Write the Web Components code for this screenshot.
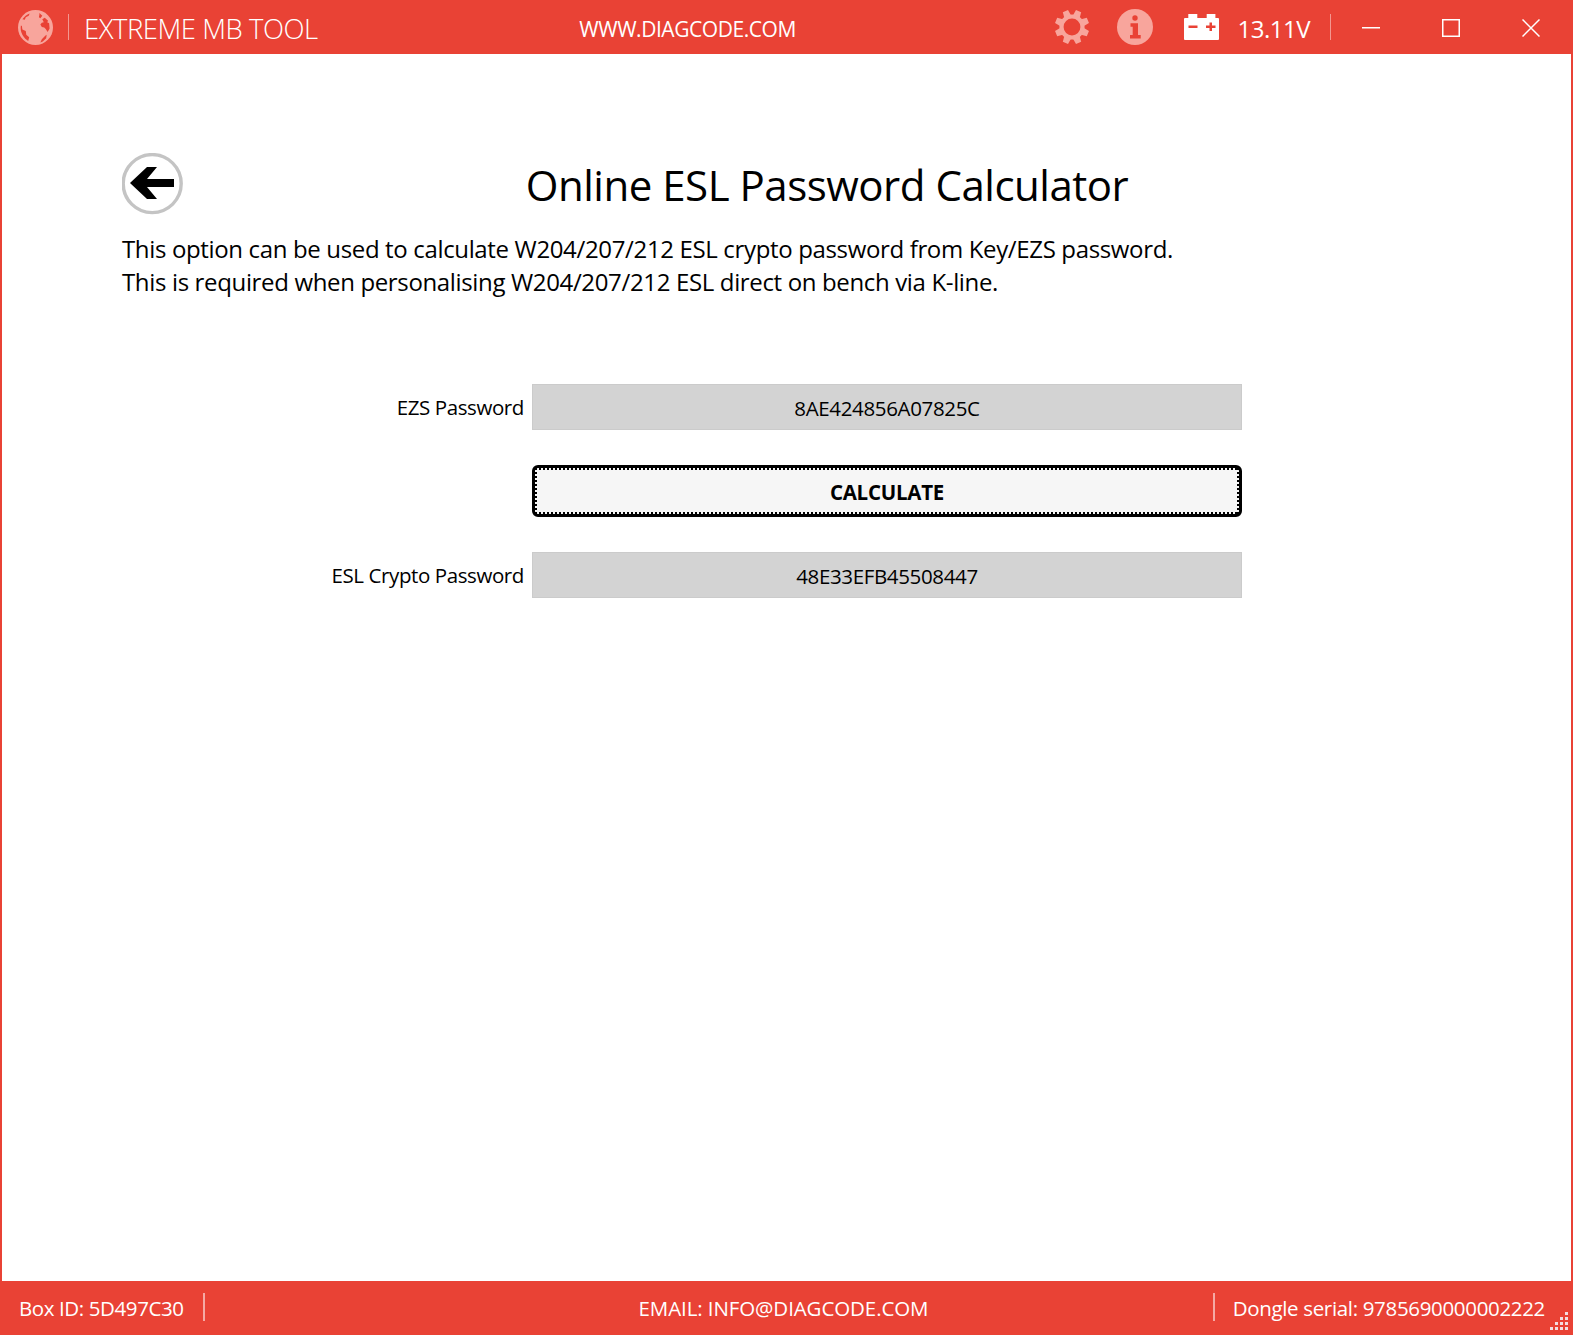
<!DOCTYPE html>
<html>
<head>
<meta charset="utf-8">
<title>Extreme MB Tool</title>
<style>
  html, body { margin: 0; padding: 0; height: 100%; }
  body { font-family: "Open Sans", "Noto Sans", sans-serif; color: #000; background: #fff; }
</style>
</head>
<body>
<mb-window>
  <mb-titlebar slot="top" voltage="13.11V"></mb-titlebar>
  <esl-page>
    <mb-field label="EZS Password" value="8AE424856A07825C"></mb-field>
    <mb-action-button>CALCULATE</mb-action-button>
    <mb-field label="ESL Crypto Password" value="48E33EFB45508447"></mb-field>
  </esl-page>
  <mb-statusbar slot="bottom" box="5D497C30" email="INFO@DIAGCODE.COM" dongle="9785690000002222"></mb-statusbar>
</mb-window>

<script>
//main window frame, red border with top and bottom bars
class mbWindow extends HTMLElement {
    connectedCallback() {
        const shadow = this.attachShadow({mode: "open"});
        shadow.innerHTML = `
        <style>
            :host {
                display: flex;
                flex-direction: column;
                width: 1573px;
                height: 1335px;
                box-sizing: border-box;
            }
            .middle {
                flex: 1;
                min-height: 0;
                border-left: 2px solid #e94235;
                border-right: 2px solid #e94235;
            }
        </style>
        <slot name="top"></slot>
        <div class="middle"><slot></slot></div>
        <slot name="bottom"></slot>`;
    }
}

//title bar with globe, app name, site and status icons
class mbTitlebar extends HTMLElement {
    connectedCallback() {
        const shadow = this.attachShadow({mode: "open"});
        const teeth = [0, 45, 90, 135, 180, 225, 270, 315].map(a =>
            `<path d="M15.200 .8h5.600l.9 6.700h-7.400z" transform="rotate(${a + 22.5} 18 18)"/>`).join("");
        shadow.innerHTML = `
        <style>
            :host {
                display: flex;
                align-items: center;
                height: 54px;
                background: #e94235;
                color: #fff;
            }
            svg { display: block; flex: none; }
            .left { display: flex; align-items: center; padding-left: 18px; padding-right: 3px; }
            .sep { width: 1px; height: 26px; background: rgba(255,255,255,.45); flex: none; }
            .name { font-size: 27.500px; font-weight: 300; margin-left: 15px; letter-spacing: -.47px; white-space: nowrap; padding-top: 2px; }
            .site { flex: 1; text-align: center; font-size: 21px; letter-spacing: -.45px; white-space: nowrap; padding-top: 4px; }
            .right { display: flex; align-items: center; padding-right: 2px; }
            .volt { font-size: 24px; margin-left: 18px; margin-right: 20px; letter-spacing: -.5px; padding-top: 2px; }
            .btn { width: 80px; display: flex; justify-content: center; padding-top: 2px; }
        </style>
        <div class="left">
            <svg width="35" height="35" viewBox="0 0 36 36">
                <circle cx="18" cy="18" r="18" fill="#f8a59c"/>
                <path fill="#e94235" d="M12 3.500c-3 1.200-5.500 3.200-7.500 6l2.500.5 1-2.500 3-1.500zM22 3l3 3-2 2.500-1.500-1 .5-2.500zM25 9.500l2.500-1.500 3.500 3-1 1.500 2 1 .5 5.500-2 3.500-2-3-1.500-1.500-2.500-.5-1.500-2.500 1.500-2 2-.5zM3 16c-1 5 1 10 4.500 13.500l3 2.500 1-4-3-2.500-.5-4-3.500-1.500-.5-3.500zM28 26.500l1.500-1-.5 3.500-3.500 3.500-2.500 1 1.500-3.500z"/>
            </svg>
            <div class="sep" style="margin-left:15px"></div>
            <div class="name">EXTREME MB TOOL</div>
        </div>
        <div class="site">WWW.DIAGCODE.COM</div>
        <div class="right">
            <svg width="36" height="36" viewBox="0 0 36 36" fill="#f8a59c" style="margin-right:27px">
                ${teeth}
                <circle cx="18" cy="18" r="10.500" fill="none" stroke="#f8a59c" stroke-width="4.200"/>
            </svg>
            <svg width="36" height="36" viewBox="0 0 36 36" style="margin-right:31px">
                <circle cx="18" cy="18" r="18" fill="#f8a59c"/>
                <circle cx="18" cy="9" r="2.700" fill="#e94235"/>
                <path fill="#e94235" d="M13.500 14.300h7.500v11.700h2.700v3.500h-10.700v-3.500h2.700v-8.200h-2.200z"/>
            </svg>
            <svg width="35" height="26" viewBox="0 0 35 26">
                <path fill="#fff" d="M4.300 0h9v4h9.400v-4h8.700v4h2.600a1 1 0 0 1 1 1v20a1 1 0 0 1-1 1h-33a1 1 0 0 1-1-1v-20a1 1 0 0 1 1-1h3.300z"/>
                <path fill="#e94235" d="M4.500 11.500h9v2.500h-9zM25.500 8.500h2.500v3h3.500v2.500h-3.500v3h-2.500v-3h-3.500v-2.500h3.500z"/>
            </svg>
            <div class="volt">${this.getAttribute("voltage")}</div>
            <div class="sep"></div>
            <div class="btn">
                <svg width="18" height="18" viewBox="0 0 18 18"><rect y="8" width="18" height="1.500" fill="#fff"/></svg>
            </div>
            <div class="btn">
                <svg width="18" height="18" viewBox="0 0 18 18"><rect x=".75" y=".75" width="16.500" height="16.500" fill="none" stroke="#fff" stroke-width="1.500"/></svg>
            </div>
            <div class="btn">
                <svg width="18" height="18" viewBox="0 0 18 18"><path d="M.5.500l17 17M17.500.500l-17 17" fill="none" stroke="#fff" stroke-width="1.500"/></svg>
            </div>
        </div>`;
    }
}

//bottom status bar
class mbStatusbar extends HTMLElement {
    connectedCallback() {
        const shadow = this.attachShadow({mode: "open"});
        const dots = [[16,1],[16,6],[11,6],[16,11],[11,11],[6,11],[16,16],[11,16],[6,16],[1,16]].map(d =>
            `<rect x="${d[0]}" y="${d[1]}" width="3" height="3"/>`).join("");
        shadow.innerHTML = `
        <style>
            :host {
                display: grid;
                grid-template-columns: 1fr auto 1fr;
                align-items: center;
                position: relative;
                height: 54px;
                padding-right: 6px;
                box-sizing: border-box;
                background: #e94235;
                color: #fff;
                font-size: 20.500px;
                letter-spacing: -.4px;
                white-space: nowrap;
            }
            .side { display: flex; align-items: center; }
            .side.end { justify-content: flex-end; }
            .box { margin-left: 19px; }
            .sep { width: 2px; height: 28px; margin-bottom: 2px; background: rgba(255,255,255,.55); flex: none; }
            .mid { letter-spacing: -.1px; }
            .dongle { margin-left: 18px; margin-right: 22px; letter-spacing: -.33px; }
            svg { position: absolute; right: 4px; bottom: 4px; }
        </style>
        <div class="side">
            <div class="box">Box ID: ${this.getAttribute("box")}</div>
            <div class="sep" style="margin-left:19px"></div>
        </div>
        <div class="mid">EMAIL: ${this.getAttribute("email")}</div>
        <div class="side end">
            <div class="sep"></div>
            <div class="dongle">Dongle serial: ${this.getAttribute("dongle")}</div>
        </div>
        <svg width="20" height="20" viewBox="0 0 20 20" fill="#f3dde0">${dots}</svg>`;
    }
}

//page body: back button, heading, text and the form
class eslPage extends HTMLElement {
    connectedCallback() {
        const shadow = this.attachShadow({mode: "open"});
        shadow.innerHTML = `
        <style>
            :host {
                display: block;
                padding: 99px 101px 0 120px;
            }
            .head { display: flex; align-items: center; height: 62px; }
            .back {
                width: 62px;
                height: 62px;
                flex: none;
            }
            h1 {
                flex: 1;
                margin: 0;
                padding-top: 1px;
                text-align: center;
                font-weight: 400;
                font-size: 42px;
                letter-spacing: -.48px;
                line-height: 62px;
            }
            p {
                margin: 17px 0 0;
                font-size: 24px;
                line-height: 33px;
                letter-spacing: -.35px;
                white-space: nowrap;
            }
            .form {
                display: flex;
                flex-direction: column;
                gap: 35px;
                margin-top: 86px;
            }
        </style>
        <div class="head">
            <svg class="back" viewBox="0 0 62 62">
                <circle cx="30.200" cy="30.600" r="29" fill="#fff" stroke="#c4c4c4" stroke-width="3.400"/>
                <path d="M8 30l17-16h10l-10 12h27v8h-27l10 12h-10z"/>
            </svg>
            <h1>Online ESL Password Calculator</h1>
        </div>
        <p>This option can be used to calculate W204/207/212 ESL crypto password from Key/EZS password.<br>This is required when personalising W204/207/212 ESL direct on bench via K-line.</p>
        <div class="form"><slot></slot></div>`;
    }
}

//label plus read only grey value box
class mbField extends HTMLElement {
    connectedCallback() {
        const shadow = this.attachShadow({mode: "open"});
        shadow.innerHTML = `
        <style>
            :host { display: flex; align-items: center; }
            label {
                width: 402px;
                padding-right: 8px;
                box-sizing: content-box;
                text-align: right;
                font-size: 20.500px;
                letter-spacing: -.4px;
                white-space: nowrap;
            }
            .value {
                width: 710px;
                height: 46px;
                box-sizing: border-box;
                background: #d3d3d3;
                border: 1px solid #cbcbcb;
                display: flex;
                align-items: center;
                justify-content: center;
                font-size: 20.500px;
                letter-spacing: -.35px;
                padding-top: 2px;
            }
        </style>
        <label>${this.getAttribute("label")}</label>
        <div class="value">${this.getAttribute("value")}</div>`;
    }
}

//focused button, thick black border and dotted focus line
class mbActionButton extends HTMLElement {
    connectedCallback() {
        const shadow = this.attachShadow({mode: "open"});
        shadow.innerHTML = `
        <style>
            :host { display: block; margin-left: 410px; width: 710px; }
            .btn {
                box-sizing: border-box;
                height: 52px;
                border: 3px solid #000;
                border-radius: 6px;
                background: #f6f6f6;
                display: flex;
            }
            .focus {
                flex: 1;
                display: flex;
                align-items: center;
                justify-content: center;
                font-size: 20.500px;
                font-weight: 700;
                letter-spacing: -.25px;
                padding-top: 2px;
                background:
                    repeating-linear-gradient(90deg, #000 0 2px, transparent 2px 4px) top left / 100% 2px no-repeat,
                    repeating-linear-gradient(90deg, #000 0 2px, transparent 2px 4px) bottom left / 100% 2px no-repeat,
                    repeating-linear-gradient(0deg, #000 0 2px, transparent 2px 4px) top left / 2px 100% no-repeat,
                    repeating-linear-gradient(0deg, #000 0 2px, transparent 2px 4px) top right / 2px 100% no-repeat;
            }
        </style>
        <div class="btn"><div class="focus"><slot></slot></div></div>`;
    }
}

customElements.define("mb-window", mbWindow);
customElements.define("mb-titlebar", mbTitlebar);
customElements.define("mb-statusbar", mbStatusbar);
customElements.define("esl-page", eslPage);
customElements.define("mb-field", mbField);
customElements.define("mb-action-button", mbActionButton);
</script>
</body>
</html>
